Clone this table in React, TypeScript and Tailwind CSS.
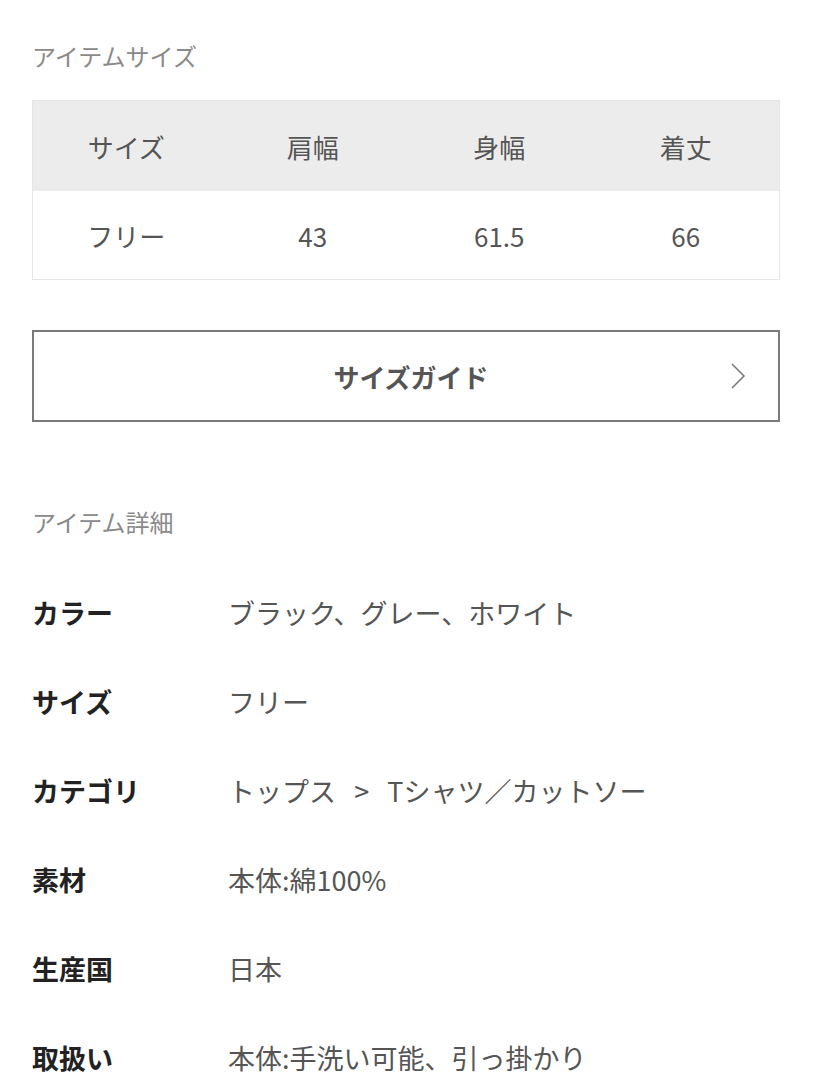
import React from 'react';

const sizeHeaders = ['サイズ', '肩幅', '身幅', '着丈'];
const sizeRow = ['フリー', '43', '61.5', '66'];

const details: { label: string; value: string }[] = [
  { label: 'カラー', value: 'ブラック、グレー、ホワイト' },
  { label: 'サイズ', value: 'フリー' },
  { label: 'カテゴリ', value: 'トップス   >   Tシャツ／カットソー' },
  { label: '素材', value: '本体:綿100%' },
  { label: '生産国', value: '日本' },
  { label: '取扱い', value: '本体:手洗い可能、引っ掛かり' },
];

const App: React.FC = () => {
  return (
    <div
      className="w-[814px] h-[1080px] overflow-hidden bg-white pl-[32px] pr-[34px] pt-[40px]"
      style={{ fontFamily: '"Noto Sans CJK JP", "Noto Sans", sans-serif' }}
    >
      {/* item size */}
      <h2 className="text-[24px] leading-[32px] text-[#8a8a8a]">アイテムサイズ</h2>

      <div className="mt-[28px] border border-[#e6e6e6]">
        <div className="grid grid-cols-4 h-[90px] items-center bg-[#ececec]">
          {sizeHeaders.map((h) => (
            <div key={h} className="text-center text-[26px] text-[#555]">{h}</div>
          ))}
        </div>
        <div className="grid grid-cols-4 h-[88px] items-center bg-white">
          {sizeRow.map((v) => (
            <div key={v} className="text-center text-[26px] text-[#555]">{v}</div>
          ))}
        </div>
      </div>

      <button
        type="button"
        className="relative mt-[50px] w-full h-[92px] flex items-center justify-center border-2 border-[#7a7a7a] bg-white"
      >
        <span className="pl-[10px] text-[26px] font-bold text-[#555]">サイズガイド</span>
        <svg
          className="absolute right-[32px] top-1/2 -translate-y-1/2"
          width="16"
          height="28"
          viewBox="0 0 16 28"
          fill="none"
          stroke="#7a7a7a"
          strokeWidth={1.6}
        >
          <path d="M2 2 L14 14 L2 26" />
        </svg>
      </button>

      {/* item detail */}
      <h2 className="mt-[84px] text-[24px] leading-[32px] text-[#8a8a8a]">アイテム詳細</h2>

      <div className="mt-[31px]">
        {details.map((d) => (
          <div key={d.label} className="flex items-center h-[89px]">
            <div className="w-[196px] text-[27px] font-bold text-[#222]">{d.label}</div>
            <div className="whitespace-pre text-[27px] text-[#555]">{d.value}</div>
          </div>
        ))}
      </div>
    </div>
  );
};

export default App;
